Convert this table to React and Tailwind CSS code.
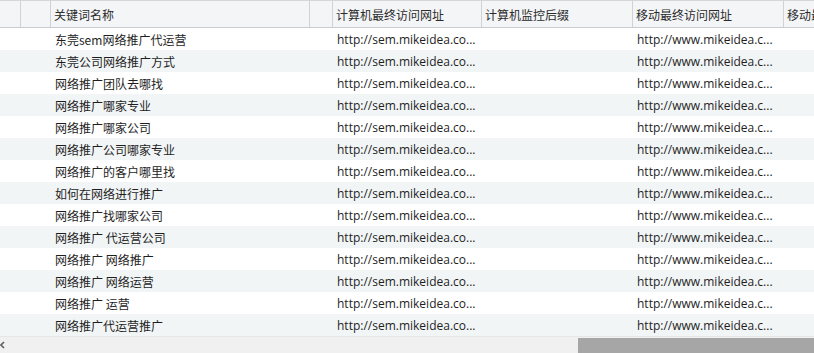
import React from 'react';

const cols = [
  { w: 'w-[21px]', label: '' },
  { w: 'w-[30px]', label: '' },
  { w: 'w-[259px]', label: '关键词名称' },
  { w: 'w-[23px]', label: '' },
  { w: 'w-[149px]', label: '计算机最终访问网址' },
  { w: 'w-[151px]', label: '计算机监控后缀' },
  { w: 'w-[151px]', label: '移动最终访问网址' },
  { w: 'w-[80px]', label: '移动最终访问后缀' },
];

const keywords = [
  '东莞sem网络推广代运营',
  '东莞公司网络推广方式',
  '网络推广团队去哪找',
  '网络推广哪家专业',
  '网络推广哪家公司',
  '网络推广公司哪家专业',
  '网络推广的客户哪里找',
  '如何在网络进行推广',
  '网络推广找哪家公司',
  '网络推广 代运营公司',
  '网络推广 网络推广',
  '网络推广 网络运营',
  '网络推广 运营',
  '网络推广代运营推广',
];

const font = { fontFamily: '"Noto Sans CJK SC", "Noto Sans", sans-serif' };

export default function App() {
  return (
    <div className="w-[814px] h-[353px] bg-white overflow-hidden flex flex-col text-[12px]" style={font}>
      <div className="h-[28px] flex shrink-0 bg-[#f4f5f7] border-t border-[#d3d7dc] border-b border-b-[#c8cdd4]">
        {cols.map((c, i) => (
          <div
            key={i}
            className={`${c.w} shrink-0 border-r border-[#cfd3d9] pl-[3px] pt-[1px] flex items-center whitespace-nowrap overflow-hidden text-[#2b2b2b]`}
          >
            {c.label}
          </div>
        ))}
      </div>
      <div className="flex-1 flex flex-col">
        {keywords.map((k, i) => (
          <div key={i} className={`h-[22px] flex shrink-0 items-center pt-[1px] ${i % 2 ? 'bg-[#f2f5f6]' : 'bg-white'} text-[#1e1e1e]`}>
            <div className="w-[21px] shrink-0" />
            <div className="w-[30px] shrink-0" />
            <div className="w-[259px] shrink-0 pl-[4px] whitespace-nowrap">{k}</div>
            <div className="w-[23px] shrink-0" />
            <div className="w-[149px] shrink-0 pl-[4px] whitespace-nowrap font-['Open_Sans',sans-serif]">http://sem.mikeidea.co...</div>
            <div className="w-[151px] shrink-0" />
            <div className="w-[151px] shrink-0 pl-[4px] whitespace-nowrap font-['Open_Sans',sans-serif]">http://www.mikeidea.c...</div>
          </div>
        ))}
      </div>
      <div className="h-[17px] shrink-0 bg-[#f0f0f0] border-t border-[#e4e6e8] flex items-center">
        <svg width="8" height="8" viewBox="0 0 8 8" className="ml-[-1px]">
          <path d="M5 1 L2 4 L5 7" stroke="#606060" strokeWidth="1.6" fill="none" />
        </svg>
        <div className="ml-auto w-[236px] h-[15px] bg-[#a6a6a6]" />
      </div>
    </div>
  );
}
